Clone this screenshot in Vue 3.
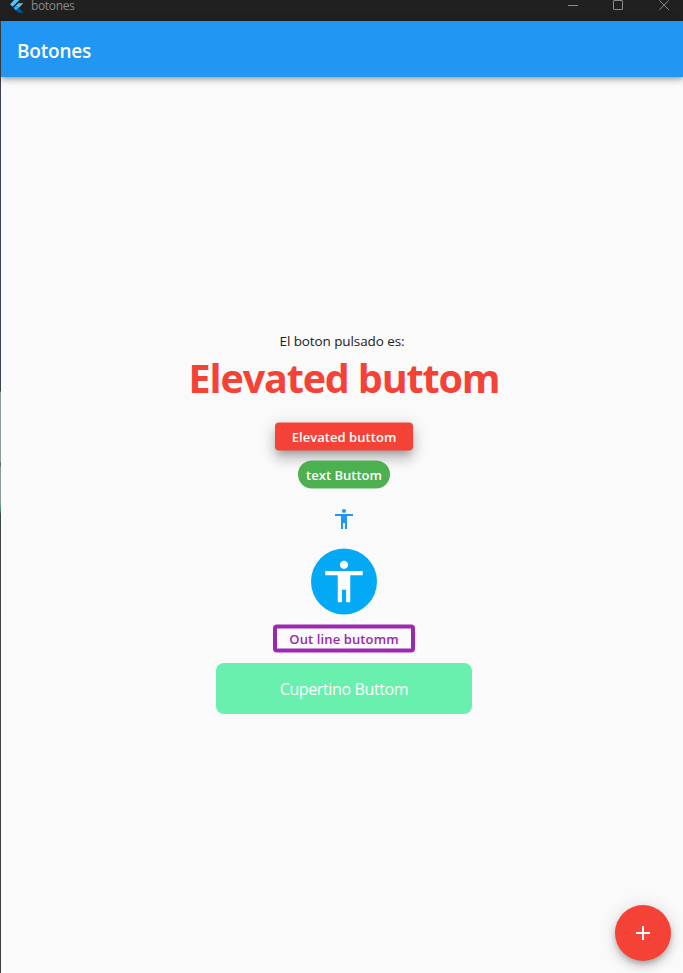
<script setup>
import { ref } from 'vue'

const pressed = ref('Elevated buttom')
const person =
  'M12 2c1.1 0 2 .9 2 2s-.9 2-2 2-2-.9-2-2 .9-2 2-2zm9 7h-6v13h-2v-6h-2v6H9V9H3V7h18v2z'
</script>

<template>
  <div class="window">
    <header class="titlebar">
      <svg class="logo" width="14" height="17" viewBox="0 0 14 17">
        <path d="M8.2 0 0 8.2 2.6 10.8 13.4 0z" fill="#54c5f8" />
        <path d="M8.2 7.3h5.1L8.6 12 6 9.5z" fill="#54c5f8" />
        <path d="M3.5 12 6 9.5 8.6 12 6 14.6z" fill="#29b6f6" />
        <path d="M6 14.6 8.6 12l4.7 4.8H8.2z" fill="#01579b" />
      </svg>
      <span class="app-name">botones</span>
      <div class="controls">
        <svg width="11" height="14" viewBox="0 0 11 14"><path d="M1 8.5h10" /></svg>
        <svg width="11" height="14" viewBox="0 0 11 14"><rect x="0.5" y="3.5" width="9" height="9" rx="0.5" /></svg>
        <svg width="11" height="14" viewBox="0 0 11 14"><path d="M0.3 3.3l9.6 9.6M9.9 3.3L0.3 12.9" /></svg>
      </div>
    </header>
    <div class="frame">
      <div class="edge"></div>
      <div class="scaffold">
        <div class="appbar"><h1>Botones</h1></div>
        <main>
          <p class="caption">El boton pulsado es:</p>
          <p class="result">{{ pressed }}</p>
          <button class="elevated" @click="pressed = 'Elevated buttom'"><span>Elevated buttom</span></button>
          <button class="text" @click="pressed = 'text Buttom'"><span>text Buttom</span></button>
          <button class="icon" @click="pressed = 'Icon buttom'">
            <svg width="24" height="24" viewBox="0 0 24 24"><path :d="person" /></svg>
          </button>
          <button class="round" @click="pressed = 'Icon buttom'">
            <svg width="50" height="50" viewBox="0 0 24 24"><path :d="person" /></svg>
          </button>
          <button class="outlined" @click="pressed = 'Out line butomm'"><span>Out line butomm</span></button>
          <button class="cupertino" @click="pressed = 'Cupertino Buttom'"><span>Cupertino Buttom</span></button>
        </main>
        <button class="fab">
          <svg width="24" height="24" viewBox="0 0 24 24"><path d="M19 13h-6v6h-2v-6H5v-2h6V5h2v6h6v2z" /></svg>
        </button>
      </div>
    </div>
  </div>
</template>

<style>
body {
  margin: 0;
  overflow: hidden;
}
</style>

<style scoped>
.window {
  width: 683px;
  height: 973px;
  display: flex;
  flex-direction: column;
  font-family: 'Segoe UI', 'Open Sans', 'Noto Sans', sans-serif;
  background: #fafafa;
  overflow: hidden;
}
.titlebar {
  height: 21px;
  flex: none;
  display: flex;
  align-items: flex-start;
  background: #202020;
}
.logo {
  margin: -4px 0 0 10px;
}
.app-name {
  margin: 0 0 0 7px;
  font-size: 12px;
  line-height: 12px;
  letter-spacing: -0.35px;
  color: #8a8a8a;
}
.controls {
  margin: -3px 13px 0 auto;
  display: flex;
  gap: 35px;
}
.controls svg {
  fill: none;
  stroke: #8a8a8a;
  stroke-width: 1;
}
.frame {
  flex: 1;
  display: flex;
  min-height: 0;
}
.edge {
  width: 1px;
  background: linear-gradient(#3c424b 0, #3c424b 370px, #8c9a96 371px, #8c9a96 440px, #52606e 443px, #8c9a96 447px, #8c9a96 482px, #358575 490px, #3f4448 494px, #3c3f43 100%);
}
.scaffold {
  flex: 1;
  display: flex;
  flex-direction: column;
  position: relative;
}
.appbar {
  height: 56px;
  flex: none;
  display: flex;
  align-items: center;
  padding-left: 16px;
  background: #2196f3;
  box-shadow: 0 2px 4px -1px rgba(0, 0, 0, 0.2), 0 4px 5px rgba(0, 0, 0, 0.14), 0 1px 10px rgba(0, 0, 0, 0.12);
}
h1 {
  margin: 5px 0 0;
  font-size: 19px;
  line-height: 27px;
  font-weight: 600;
  letter-spacing: -0.2px;
  color: #fff;
}
main {
  flex: 1;
  display: flex;
  flex-direction: column;
  align-items: center;
  padding: 254px 0 0 4px;
}
p {
  margin: 0;
  white-space: nowrap;
}
.caption {
  height: 20px;
  font-size: 13.5px;
  line-height: 21px;
  letter-spacing: -0.1px;
  color: #212121;
  margin-right: 4px;
}
.result {
  height: 54px;
  font-size: 39.5px;
  line-height: 55px;
  font-weight: 700;
  letter-spacing: -1.15px;
  color: #f44336;
}
button {
  flex: none;
  display: flex;
  align-items: center;
  justify-content: center;
  padding: 0;
  border: 0;
  font: 600 14px/20px 'Segoe UI', 'Open Sans', 'Noto Sans', sans-serif;
  color: #fff;
  white-space: nowrap;
}
.elevated,
.text,
.round,
.outlined {
  transform: translateY(0.5px);
}
.elevated {
  width: 138px;
  height: 28px;
  margin-top: 17px;
  border-radius: 4px;
  background: #f44336;
  font-size: 13px;
  letter-spacing: 0.05px;
  box-shadow: 0 5px 6px -3px rgba(0, 0, 0, 0.2), 0 9px 12px 1px rgba(0, 0, 0, 0.14), 0 3px 16px 2px rgba(0, 0, 0, 0.12);
}
.text {
  width: 92px;
  height: 28px;
  margin-top: 10px;
  border-radius: 14px;
  background: #4caf50;
  font-size: 13px;
}
.icon {
  width: 40px;
  height: 40px;
  margin-top: 11px;
  background: none;
}
.icon svg {
  fill: #2196f3;
}
.round {
  width: 66px;
  height: 66px;
  margin-top: 9px;
  border-radius: 50%;
  background: #03a9f4;
}
.round svg {
  fill: #fff;
}
.outlined {
  width: 142px;
  height: 28px;
  margin-top: 10px;
  box-sizing: border-box;
  border: 4px solid #9c27b0;
  border-radius: 4px;
  background: none;
  color: #9c27b0;
  font-size: 13px;
  letter-spacing: 0.12px;
}
.cupertino {
  width: 256px;
  height: 51px;
  margin-top: 11px;
  border-radius: 8px;
  background: #69f0ae;
  font-size: 16px;
  font-weight: 400;
  letter-spacing: -0.37px;
}
.fab {
  position: absolute;
  right: 12px;
  bottom: 12px;
  width: 56px;
  height: 56px;
  border-radius: 50%;
  background: #f44336;
  box-shadow: 0 3px 5px -1px rgba(0, 0, 0, 0.2), 0 6px 10px rgba(0, 0, 0, 0.14), 0 1px 18px rgba(0, 0, 0, 0.12);
}
.fab svg {
  fill: #fff;
}
</style>
